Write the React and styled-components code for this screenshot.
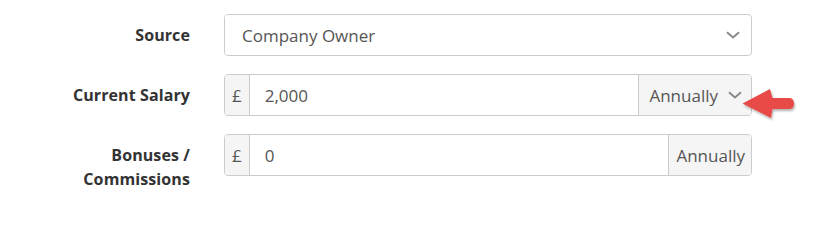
import React from "react";
import styled, { createGlobalStyle } from "styled-components";

const Global = createGlobalStyle`
  html, body { margin: 0; padding: 0; background: #fff; }
  body { font-family: "Open Sans", "Liberation Sans", sans-serif; }
`;

const Form = styled.div`
  display: flex;
  flex-direction: column;
  gap: 18px;
  padding: 14px 0 0 0;
  width: 752px;
`;

const Row = styled.div`
  display: grid;
  grid-template-columns: 190px 1fr;
  column-gap: 34px;
  align-items: start;
`;

const Label = styled.label`
  text-align: right;
  font-weight: 700;
  font-size: 16px;
  letter-spacing: 0.1px;
  color: #333;
  line-height: 24px;
  padding-top: 9px;
`;

const Group = styled.div`
  display: flex;
  height: 42px;
  border: 1px solid #ccc;
  border-radius: 4px;
  box-sizing: border-box;
  overflow: hidden;
  font-size: 17px;
  color: #555;
`;

const Field = styled.div`
  flex: 1;
  display: flex;
  align-items: center;
  padding-left: ${(p) => p.$pad || 17}px;
  background: #fff;
`;

const Addon = styled.div`
  display: flex;
  align-items: center;
  gap: 10px;
  background: #f5f5f5;
  color: #555;
  padding: 0 ${(p) => p.$pr ?? 7}px 0 ${(p) => p.$pl ?? 7}px;
  border-${(p) => p.$side}: 1px solid #ccc;
`;

const ChevronBox = styled.div`
  display: flex;
  align-items: center;
  padding-right: 11px;
`;

const Chevron = () => (
  <svg width="14" height="8" viewBox="0 0 14 8">
    <path d="M1 1.2 L7 6.5 L13 1.2" fill="none" stroke="#8a8a8a" strokeWidth="2" />
  </svg>
);

const Wrap = styled.div`
  position: relative;
`;

const Arrow = styled.svg`
  position: absolute;
  left: 516px;
  top: 12px;
  overflow: visible;
`;

export default function App() {
  return (
    <>
      <Global />
      <Form>
        <Row>
          <Label>Source</Label>
          <Group>
            <Field>Company Owner</Field>
            <ChevronBox>
              <Chevron />
            </ChevronBox>
          </Group>
        </Row>
        <Row>
          <Label>Current Salary</Label>
          <Wrap>
            <Group>
              <Addon $side="right" $pl={7} $pr={7}>£</Addon>
              <Field $pad={15}>2,000</Field>
              <Addon $side="left" $pl={10} $pr={9}>
                Annually <Chevron />
              </Addon>
            </Group>
            <Arrow width="56" height="36" viewBox="0 0 56 36">
              <defs>
                <filter id="sh" x="-20%" y="-20%" width="150%" height="160%">
                  <feDropShadow dx="1" dy="2" stdDeviation="1.3" floodColor="#000" floodOpacity="0.3" />
                </filter>
              </defs>
              <path
                d="M2.5 17.5 L30 3 L32.5 12 L49 12 Q54 12 54 17.5 Q54 23 49 23 L32.5 23 L31 32 Z"
                fill="#e84b47"
                filter="url(#sh)"
              />
            </Arrow>
          </Wrap>
        </Row>
        <Row>
          <Label>
            Bonuses /<br />Commissions
          </Label>
          <Group>
            <Addon $side="right" $pl={7} $pr={7}>£</Addon>
            <Field $pad={15}>0</Field>
            <Addon $side="left" $pl={7} $pr={6}>Annually</Addon>
          </Group>
        </Row>
      </Form>
    </>
  );
}
